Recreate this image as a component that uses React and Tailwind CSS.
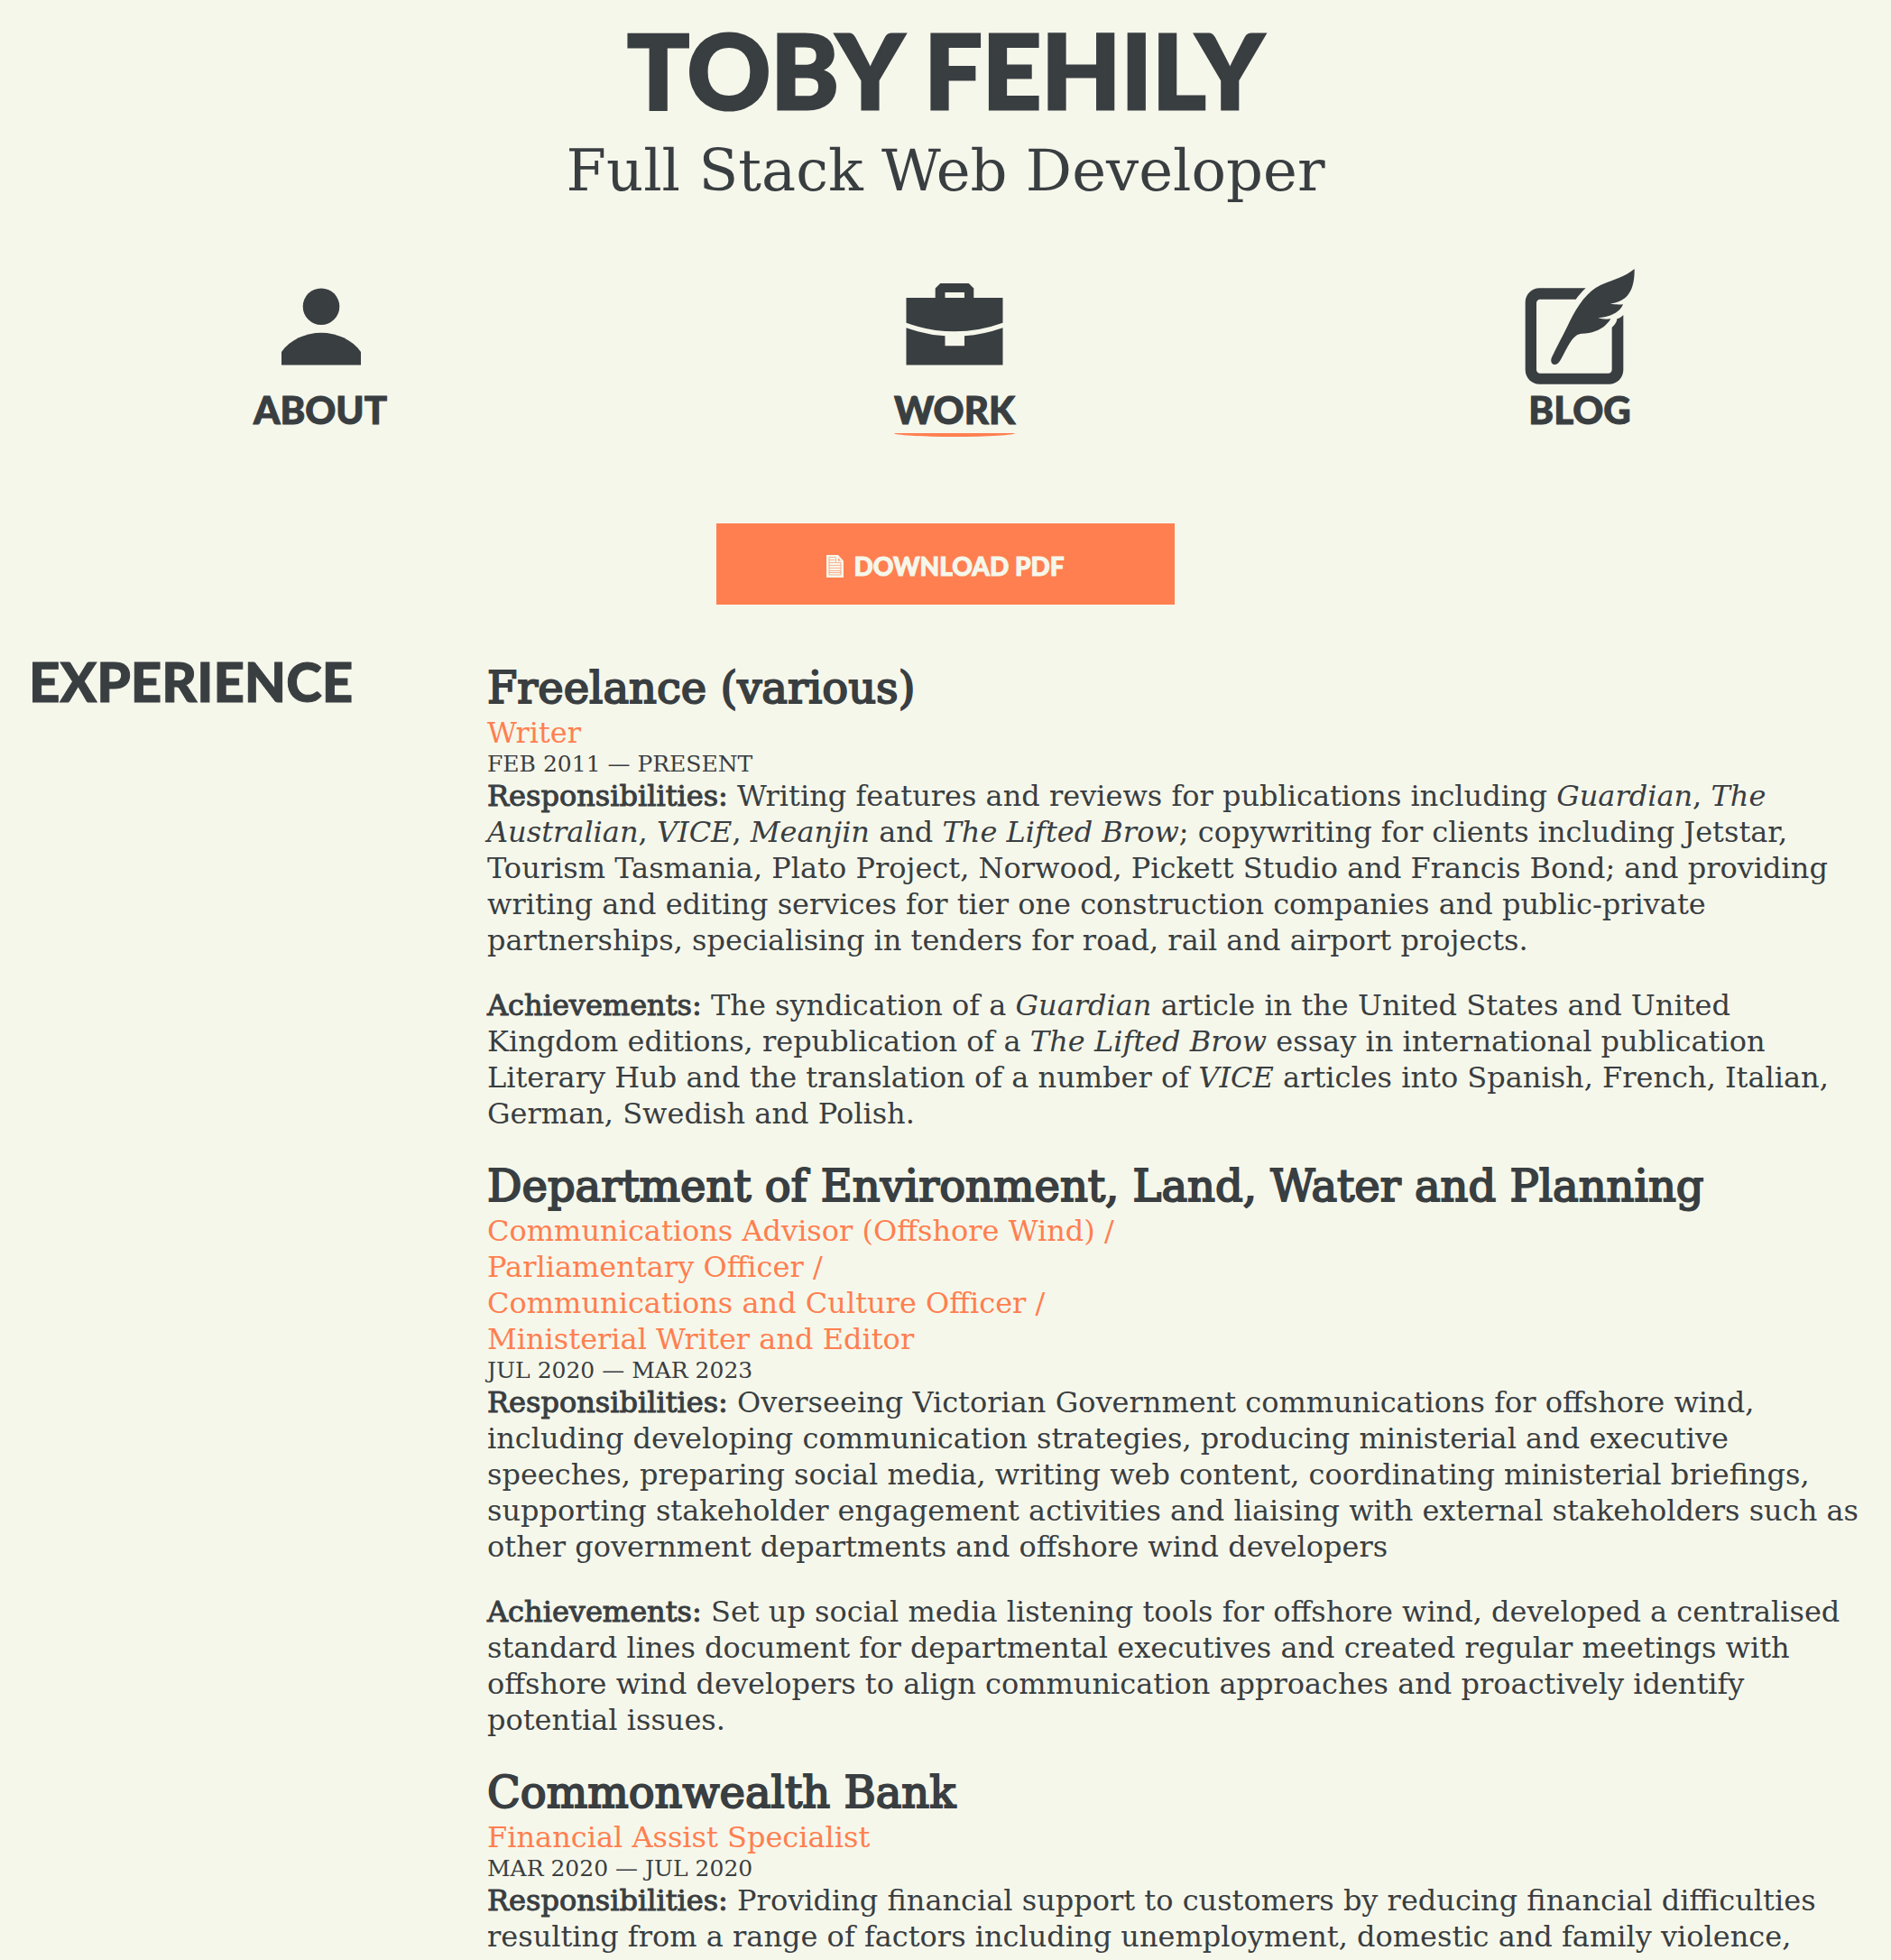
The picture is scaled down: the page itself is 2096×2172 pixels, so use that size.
import React from "react";

const display = "font-['Lato',sans-serif] font-black uppercase";

function PersonIcon() {
  return (
    <svg viewBox="0 -8 128 136" className="h-[136px] w-32" fill="currentColor" aria-hidden="true">
      <circle cx="65" cy="37.7" r="20.3" />
      <path d="M21 88C30 74.500 48 66.700 65 66.700S100 74.500 109 88V102.500H21Z" />
    </svg>
  );
}

function BriefcaseIcon() {
  return (
    <svg viewBox="0 -8 128 136" className="h-[136px] w-32" fill="currentColor" aria-hidden="true">
      <path
        fillRule="evenodd"
        d="M10.500 28H42.700V17.500L48.200 12H79.800L85.300 17.500V28H117.500V55.700Q64 75 10.500 55.700ZM53.500 22V28H75V22Z"
      />
      <path d="M10.500 61.300Q31.900 68.800 53.500 70.300V81.300H75V70.300Q96.100 68.800 117.500 61.300V102.500H10.500Z" />
    </svg>
  );
}

function QuillIcon() {
  return (
    <svg viewBox="0 -8 128 136" className="h-[136px] w-32" fill="currentColor" aria-hidden="true">
      <g transform="translate(-3 -12) scale(0.3333)">
        <path d="M221 88H68C40 88 20 109 20 136V359C20 386 41 407 68 407H298C325 407 346 386 346 359V177C340 183 333 188 325 190C325 200 317 211 308 219V359C308 366 303 371 296 371H69C62 371 57 366 57 359V137C57 130 62 125 69 125H188C198 112 209 99 221 88Z" />
        <path d="M383 24C350 52 297 65 270 78C225 100 195 145 168 198C150 236 125 283 108 318C102 332 108 342 118 342C130 342 135 330 140 322C165 275 180 240 208 239C250 238 285 222 304 190C290 192 275 191 262 187C300 184 334 170 345 142C330 143 315 143 302 139C360 133 384 95 383 24Z" />
      </g>
    </svg>
  );
}

function PageIcon() {
  return (
    <svg viewBox="0 0 19 25" className="h-[25px] w-[19px]" fill="none" aria-hidden="true">
      <path d="M0 0H13L19 6.500V25H0Z" fill="#f6f7eb" />
      <path
        d="M3 2.500H10M3 5.500H9.500M3 8.500H10M3 11.500H16M3 14.500H16M3 17.500H16M3 19.500H16M3 22H16M3 2.500V22M10.500 2.500V8.500H16V22"
        stroke="#ff7f50"
        strokeWidth="0.8"
        opacity="0.7"
      />
      <path d="M13 3.500V6.500H16Z" fill="#ff7f50" opacity="0.8" />
    </svg>
  );
}

const links = [
  { label: "About", Icon: PersonIcon, width: "w-[148px]" },
  { label: "Work", Icon: BriefcaseIcon, width: "w-[134px]", current: true },
  { label: "Blog", Icon: QuillIcon, width: "w-[128px]" },
];

const jobs = [
  {
    name: "Freelance (various)",
    roles: ["Writer"],
    dates: "Feb 2011 — Present",
    responsibilities: (
      <>
        Writing features and reviews for publications including <i>Guardian</i>, <i>The Australian</i>, <i>VICE</i>,{" "}
        <i>Meanjin</i> and <i>The Lifted Brow</i>; copywriting for clients including Jetstar, Tourism Tasmania, Plato
        Project, Norwood, Pickett Studio and Francis Bond; and providing writing and editing services for tier one
        construction companies and public-private partnerships, specialising in tenders for road, rail and airport
        projects.
      </>
    ),
    achievements: (
      <>
        The syndication of a <i>Guardian</i> article in the United States and United Kingdom editions, republication of
        a <i>The Lifted Brow</i> essay in international publication Literary Hub and the translation of a number of{" "}
        <i>VICE</i> articles into Spanish, French, Italian, German, Swedish and Polish.
      </>
    ),
  },
  {
    name: "Department of Environment, Land, Water and Planning",
    roles: [
      "Communications Advisor (Offshore Wind) /",
      "Parliamentary Officer /",
      "Communications and Culture Officer /",
      "Ministerial Writer and Editor",
    ],
    dates: "Jul 2020 — Mar 2023",
    responsibilities:
      "Overseeing Victorian Government communications for offshore wind, including developing communication strategies, producing ministerial and executive speeches, preparing social media, writing web content, coordinating ministerial briefings, supporting stakeholder engagement activities and liaising with external stakeholders such as other government departments and offshore wind developers",
    achievements:
      "Set up social media listening tools for offshore wind, developed a centralised standard lines document for departmental executives and created regular meetings with offshore wind developers to align communication approaches and proactively identify potential issues.",
  },
  {
    name: "Commonwealth Bank",
    roles: ["Financial Assist Specialist"],
    dates: "Mar 2020 — Jul 2020",
    responsibilities:
      "Providing financial support to customers by reducing financial difficulties resulting from a range of factors including unemployment, domestic and family violence,",
  },
];

function Note({ title, children }) {
  return (
    <p>
      <strong className="font-normal [-webkit-text-stroke:1px]">{title}:</strong> {children}
    </p>
  );
}

function Job({ job }) {
  return (
    <article className="text-[32px] leading-[40px]">
      <h3 className="text-[48px] leading-[60px] font-normal [-webkit-text-stroke:2px]">{job.name}</h3>
      <div className="text-[#ff7f50]">
        {job.roles.map((role) => (
          <p key={role}>{role}</p>
        ))}
      </div>
      <p className="text-[25px] leading-[30px] uppercase">{job.dates}</p>
      <div className="flex flex-col gap-8">
        <Note title="Responsibilities">{job.responsibilities}</Note>
        {job.achievements && <Note title="Achievements">{job.achievements}</Note>}
      </div>
    </article>
  );
}

export default function App() {
  return (
    <div className="min-h-screen overflow-x-hidden bg-[#f6f7eb] font-['DejaVu_Serif',serif] text-[#393e41]">
      <header className="pt-4 text-center">
        <h1 className={`${display} text-[114px] leading-[122px] [-webkit-text-stroke:3px]`}>Toby Fehily</h1>
        <p className="mt-2 text-[64px] leading-[86px]">Full Stack Web Developer</p>
      </header>

      <nav className="mt-[62px] flex justify-around">
        {links.map(({ label, Icon, width, current }) => (
          <a
            key={label}
            href={`#${label.toLowerCase()}`}
            aria-current={current ? "page" : undefined}
            className={`flex flex-col items-center ${width}`}
          >
            <Icon />
            <span className={`${display} text-[42px] leading-[48px] [-webkit-text-stroke:1px]`}>{label}</span>
            <span
              className={`mt-0.5 h-1 w-full rounded-[0_0_50%_50%/0_0_100%_100%] ${current ? "bg-[#ff7f50]" : ""}`}
            />
          </a>
        ))}
      </nav>

      <main className="px-8">
        <button
          type="button"
          className={`${display} mx-auto mt-24 flex h-[90px] w-1/4 items-center justify-center gap-[11px] bg-[#ff7f50] pt-1 text-[28px] text-[#f6f7eb] [-webkit-text-stroke:1px]`}
        >
          <PageIcon />
          Download PDF
        </button>

        <section className="mt-12 flex">
          <h2 className={`${display} w-1/4 text-[60px] leading-[75px] [-webkit-text-stroke:1px]`}>Experience</h2>
          <div className="flex w-3/4 flex-col gap-[30px] pt-3.5">
            {jobs.map((job) => (
              <Job key={job.name} job={job} />
            ))}
          </div>
        </section>
      </main>
    </div>
  );
}
